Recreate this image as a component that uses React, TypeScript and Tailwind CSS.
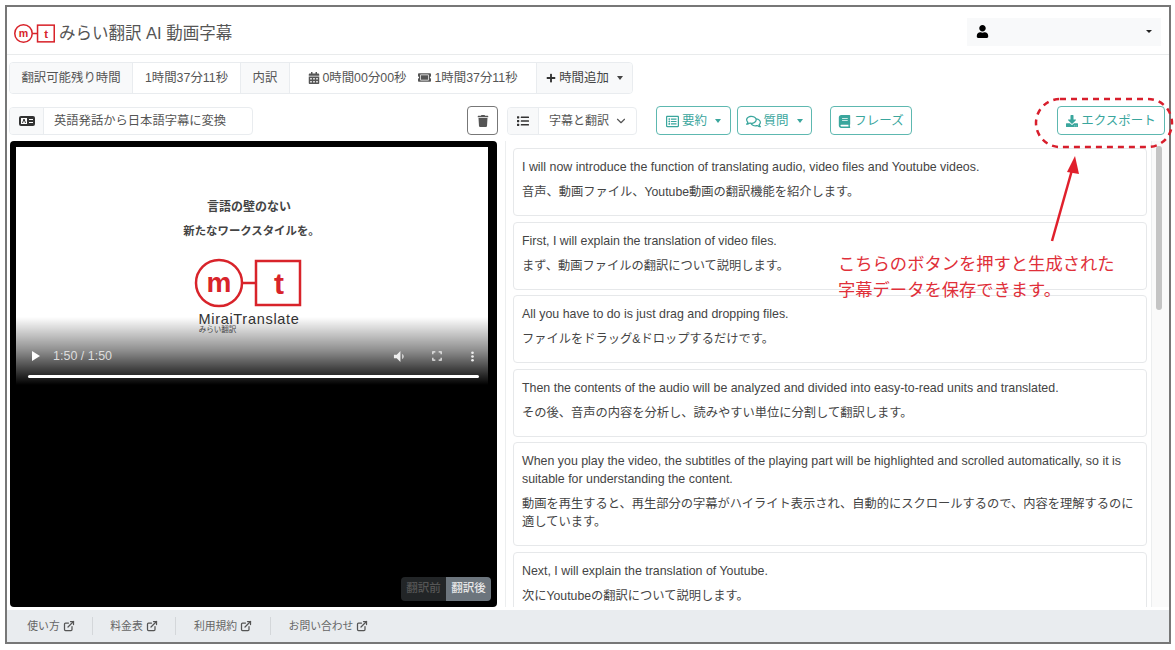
import { ChevronDown, ExternalLink } from "lucide-react";
import {
  FaBook,
  FaCalendarAlt,
  FaDownload,
  FaList,
  FaPlus,
  FaRegComments,
  FaRegListAlt,
  FaTicketAlt,
  FaTrash,
  FaUser,
} from "react-icons/fa";

const subtitles = [
  {
    en: "I will now introduce the function of translating audio, video files and Youtube videos.",
    ja: "音声、動画ファイル、Youtube動画の翻訳機能を紹介します。",
  },
  {
    en: "First, I will explain the translation of video files.",
    ja: "まず、動画ファイルの翻訳について説明します。",
  },
  {
    en: "All you have to do is just drag and dropping files.",
    ja: "ファイルをドラッグ&ドロップするだけです。",
  },
  {
    en: "Then the contents of the audio will be analyzed and divided into easy-to-read units and translated.",
    ja: "その後、音声の内容を分析し、読みやすい単位に分割して翻訳します。",
  },
  {
    en: "When you play the video, the subtitles of the playing part will be highlighted and scrolled automatically, so it is suitable for understanding the content.",
    ja: "動画を再生すると、再生部分の字幕がハイライト表示され、自動的にスクロールするので、内容を理解するのに適しています。",
  },
  {
    en: "Next, I will explain the translation of Youtube.",
    ja: "次にYoutubeの翻訳について説明します。",
  },
];

const footerLinks = [
  { label: "使い方", width: "w-[83px]" },
  { label: "料金表", width: "w-[83px]" },
  { label: "利用規約", width: "w-[95px]" },
  { label: "お問い合わせ", width: "w-[115px]" },
];

function Caret() {
  return (
    <span className="ml-2 inline-block h-0 w-0 border-x-[3.5px] border-t-[4px] border-x-transparent border-t-current" />
  );
}

function Logo({ size }: { size: "small" | "large" }) {
  const large = size === "large";
  return (
    <svg
      viewBox="0 0 108 50"
      className={large ? "h-[50px] w-[108px]" : "h-[19px] w-[41px]"}
    >
      <circle cx="25" cy="25" r="23" fill="#fff" stroke="#d8232a" strokeWidth={large ? 2.5 : 4} />
      <line x1="48" y1="25" x2="62" y2="25" stroke="#d8232a" strokeWidth={large ? 2.5 : 4} />
      <rect x="62" y="3" width="44" height="44" fill="#fff" stroke="#d8232a" strokeWidth={large ? 2.5 : 4} />
      <text x="25" y="34" textAnchor="middle" fontSize="28" fontWeight="700" fill="#d8232a" fontFamily="Liberation Sans, sans-serif">
        m
      </text>
      <text x="85" y="36" textAnchor="middle" fontSize="30" fontWeight="700" fill="#d8232a" fontFamily="Liberation Sans, sans-serif">
        t
      </text>
    </svg>
  );
}

function SubtitleCard({ en, ja }: { en: string; ja: string }) {
  return (
    <div className="shrink-0 rounded border border-[#e6e8ea] bg-white px-[8px] pt-[9px] pb-[14px] leading-[18px] text-[#444]">
      <p className="text-[12.4px]">{en}</p>
      <p className="mt-[7px] text-[12.25px]">{ja}</p>
    </div>
  );
}

export default function App() {
  return (
    <div
      className="relative h-[650px] w-[1175px] overflow-hidden bg-white pt-[5px] pl-[5px]"
      style={{ fontFamily: '"Liberation Sans", "Noto Sans CJK JP", sans-serif' }}
    >
      <div className="flex h-[639px] w-[1166px] flex-col overflow-hidden border-2 border-[#777] bg-white">
        <header className="flex h-[48px] shrink-0 items-center justify-between border-b border-[#e9ebec] pt-[2px] pr-[8px] pl-[7px]">
          <div className="mt-[4px] flex items-center gap-[4px]">
            <Logo size="small" />
            <span className="text-[16.5px] text-[#555]">みらい翻訳 AI 動画字幕</span>
          </div>
          <div className="flex h-[28px] w-[194px] items-center justify-between bg-[#f8f9fa] pr-[10px] pl-[9px] text-[#222]">
            <FaUser className="h-[13px] w-[13px] text-black" />
            <span className="-mr-[1px] h-0 w-0 border-x-[3px] border-t-[3.5px] border-x-transparent border-t-[#222]" />
          </div>
        </header>

        <div className="flex shrink-0 px-[2px] pt-[7px]">
          <div className="flex h-[32px] items-stretch overflow-hidden rounded border border-[#e9ecef] text-[12.4px] text-[#555]">
            <div className="flex w-[123px] items-center justify-center border-r border-[#e9ecef] bg-[#f8f9fa]">翻訳可能残り時間</div>
            <div className="flex w-[107px] items-center justify-center">1時間37分11秒</div>
            <div className="flex w-[50px] items-center justify-center border-x border-[#e9ecef] bg-[#f8f9fa]">内訳</div>
            <div className="flex w-[246px] items-center justify-center gap-[12px]">
              <span className="flex items-center gap-[2px]">
                <FaCalendarAlt className="h-[12px] w-[12px]" />
                0時間00分00秒
              </span>
              <span className="flex items-center gap-[3px]">
                <FaTicketAlt className="h-[13px] w-[13px]" />
                1時間37分11秒
              </span>
            </div>
            <div className="flex w-[96px] items-center justify-center border-l border-[#e9ecef] bg-[#f8f9fa] text-[#444]">
              <FaPlus className="mr-[3px] h-[10px] w-[10px] text-[#333]" />
              時間追加
              <Caret />
            </div>
          </div>
        </div>

        <div className="flex shrink-0 items-center pt-[12px] pr-[4px] pl-[2px]">
          <div className="flex w-[489px] items-center justify-between">
            <div className="flex h-[28px] w-[244px] items-stretch overflow-hidden rounded border border-[#e9ecef] text-[12.3px] text-[#555]">
              <div className="flex w-[34px] items-center justify-center border-r border-[#e9ecef] bg-[#f8f9fa]">
                <svg viewBox="0 0 16 10" className="h-[10px] w-[16px]">
                  <rect width="16" height="10" rx="2" fill="#333" />
                  <rect x="2" y="2" width="6" height="6" fill="#fff" />
                  <path d="M3.500 7L5 3l1.500 4" fill="none" stroke="#333" strokeWidth="1" />
                  <path d="M10 3.500h4M10 6.500h4" stroke="#fff" strokeWidth="1" />
                </svg>
              </div>
              <div className="flex items-center pt-[1px] pl-[10px]">英語発話から日本語字幕に変換</div>
            </div>
            <button
              type="button"
              className="flex h-[29px] w-[31px] items-center justify-center rounded border border-[#777] text-[#555]"
            >
              <FaTrash className="h-[12px] w-[12px]" />
            </button>
          </div>

          <div className="ml-[9px] flex h-[28px] w-[130px] items-stretch overflow-hidden rounded border border-[#e9ecef] text-[12px] text-[#555]">
            <div className="flex w-[31px] items-center justify-center border-r border-[#e9ecef] bg-[#f8f9fa]">
              <FaList className="h-[12px] w-[12px] text-[#333]" />
            </div>
            <div className="flex flex-1 items-center justify-between pt-[1px] pr-[8px] pl-[10px]">
              字幕と翻訳
              <ChevronDown size={14} />
            </div>
          </div>

          <button
            type="button"
            className="ml-[19px] flex h-[29px] w-[75px] items-center justify-center rounded border border-[#5db8b0] pt-[1px] text-[12.5px] text-[#3aa69d]"
          >
            <FaRegListAlt className="mr-[3px] h-[13px] w-[13px]" />
            要約
            <Caret />
          </button>
          <button
            type="button"
            className="ml-[6px] flex h-[29px] w-[75px] items-center justify-center rounded border border-[#5db8b0] pt-[1px] text-[12.5px] text-[#3aa69d]"
          >
            <FaRegComments className="mr-[2px] h-[15px] w-[15px]" />
            質問
            <Caret />
          </button>
          <button
            type="button"
            className="ml-[18px] flex h-[29px] w-[82px] items-center justify-center rounded border border-[#5db8b0] pt-[1px] text-[12.5px] text-[#3aa69d]"
          >
            <FaBook className="mr-[3px] h-[13px] w-[13px]" />
            フレーズ
          </button>
          <button
            type="button"
            className="ml-auto flex h-[29px] w-[108px] items-center justify-center rounded border border-[#5db8b0] pt-[1px] text-[12.5px] text-[#3aa69d]"
          >
            <FaDownload className="mr-[3px] h-[12px] w-[12px]" />
            エクスポート
          </button>
        </div>

        <main className="flex min-h-0 flex-1 pt-[6px] pb-[3px] pl-[3px]">
          <section className="relative h-full w-[487px] shrink-0 overflow-hidden rounded-[4px] bg-black pt-[6px] pr-[9px] pl-[6px]">
            <div className="relative h-[238px] bg-white">
              <div className="flex flex-col items-center pt-[52px] pr-[6px]">
                <p className="text-[12px] font-bold leading-[16px] text-[#444]">言語の壁のない</p>
                <p className="mt-[8px] ml-[5px] text-[11.4px] font-bold leading-[16px] text-[#444]">新たなワークスタイルを。</p>
                <div className="mt-[19px] pr-[2px]">
                  <Logo size="large" />
                </div>
                <p className="mt-[3px] text-[14.5px] leading-[16px] tracking-[0.7px] text-[#333]">MiraiTranslate</p>
                <p className="mr-[63px] -mt-[1px] text-[7.5px] leading-[7px] text-[#555]">みらい翻訳</p>
              </div>
              <div className="absolute inset-x-0 bottom-0 h-[68px] bg-gradient-to-b from-black/0 via-black/45 to-black" />
              <div className="absolute inset-x-0 top-[200px] flex items-center pr-[13px] pl-[16px] text-[12.5px] text-[#ddd]">
                <span className="h-0 w-0 border-y-[5px] border-l-[8px] border-y-transparent border-l-white" />
                <span className="ml-[13px]">1:50 / 1:50</span>
                <svg viewBox="0 0 14 14" className="ml-auto h-[13px] w-[13px]">
                  <path d="M1 5h3l4-4v12l-4-4H1zM10 4c2 1.500 2 4.500 0 6z" fill="#eee" />
                </svg>
                <svg viewBox="0 0 12 12" className="ml-[26px] h-[10px] w-[10px]">
                  <path d="M1 4V1h3M8 1h3v3M11 8v3H8M4 11H1V8" fill="none" stroke="#eee" strokeWidth="1.500" />
                </svg>
                <svg viewBox="0 0 4 14" className="mr-[1px] ml-[29px] h-[11px] w-[3px]">
                  <circle cx="2" cy="2" r="1.800" fill="#eee" />
                  <circle cx="2" cy="7" r="1.800" fill="#eee" />
                  <circle cx="2" cy="12" r="1.800" fill="#eee" />
                </svg>
              </div>
              <div className="absolute top-[228px] right-[9px] left-[12px] h-[2.500px] rounded-sm bg-white" />
            </div>
            <div className="absolute right-[6px] bottom-[6px] flex h-[24px] w-[90px] overflow-hidden rounded text-[11.5px] font-medium">
              <span className="flex flex-1 items-center justify-center bg-[#222527] text-[#555]">翻訳前</span>
              <span className="flex flex-1 items-center justify-center bg-[#6c757d] text-[#e8e8e8]">翻訳後</span>
            </div>
          </section>

          <section className="ml-[8px] flex min-w-0 flex-1 border-l border-[#eceeef]">
            <div className="flex min-w-0 flex-1 flex-col gap-[5.500px] overflow-hidden pt-[7px] pl-[7px]">
              {subtitles.map((item) => (
                <SubtitleCard key={item.en} en={item.en} ja={item.ja} />
              ))}
            </div>
            <div className="ml-[4px] w-[18px] shrink-0 border-l border-[#eceeef] bg-[#fafafa] pt-[5px] pl-[4px]">
              <div className="h-[164px] w-[6px] rounded bg-[#c4c4c4]" />
            </div>
          </section>
        </main>

        <footer className="flex h-[32px] shrink-0 items-center bg-[#e9ecef] pl-[3px] text-[10.8px] text-[#666]">
          {footerLinks.map((link, index) => (
            <div
              key={link.label}
              className={`flex h-[18px] items-center justify-center gap-[3px] ${link.width} ${index < footerLinks.length - 1 ? "border-r border-[#d4d7da]" : ""}`}
            >
              {link.label}
              <ExternalLink size={12} strokeWidth={2.5} className="text-[#555]" />
            </div>
          ))}
        </footer>
      </div>

      <svg className="pointer-events-none absolute top-0 left-0 h-[650px] w-[1175px]" viewBox="0 0 1175 650">
        <rect x="1036" y="99" width="136" height="48" rx="24" fill="none" stroke="#d81e2c" strokeWidth="2.500" strokeDasharray="6 5" />
        <line x1="1052" y1="241" x2="1072" y2="170" stroke="#e0202c" strokeWidth="2.500" />
        <polygon points="1075,156 1079,174 1067,172" fill="#e0202c" />
      </svg>
      <div className="absolute top-[251px] left-[838px] text-[17.3px] leading-[26px] text-[#e0303a]">
        <p>こちらのボタンを押すと生成された</p>
        <p>字幕データを保存できます。</p>
      </div>
    </div>
  );
}
